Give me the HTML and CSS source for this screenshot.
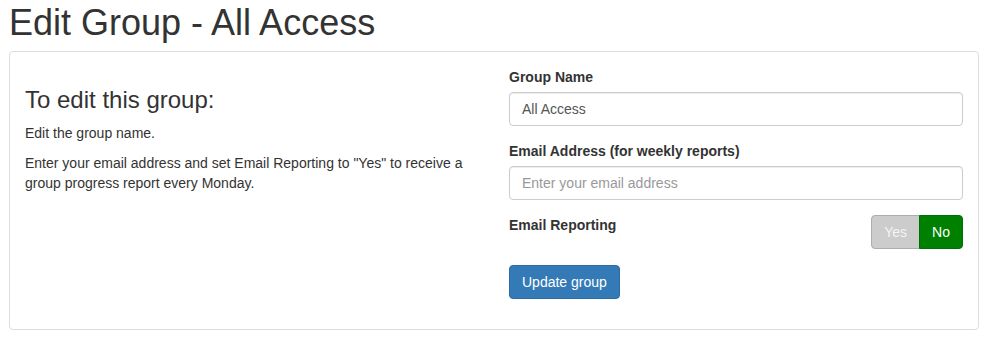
FILE: index.html
```html
<!DOCTYPE html>
<html lang="en">
<head>
  <meta charset="UTF-8" />
  <title>Edit Group - All Access</title>
  <link rel="stylesheet" href="styles.css">
</head>
<body>

  <div class="page">
    <h1 class="titulo">Edit Group - All Access</h1>

    <!-- Panel principal -->
    <div class="panel">
      <div class="columnas">

        <div class="ayuda">
          <h3>To edit this group:</h3>
          <p>Edit the group name.</p>
          <p>Enter your email address and set Email Reporting to "Yes" to receive a group progress report every Monday.</p>
        </div>

        <form class="formulario">
          <div class="grupo">
            <label for="groupName">Group Name</label>
            <input type="text" id="groupName" class="campo" value="All Access" />
          </div>

          <div class="grupo">
            <label for="email">Email Address (for weekly reports)</label>
            <input type="email" id="email" class="campo" placeholder="Enter your email address" />
          </div>

          <div class="grupo fila">
            <label>Email Reporting</label>
            <div class="toggle">
              <button type="button" class="opcion si">Yes</button>
              <button type="button" class="opcion no activo">No</button>
            </div>
          </div>

          <div class="grupo enviar">
            <button type="submit" class="boton">Update group</button>
          </div>
        </form>

      </div>
    </div>
  </div>

</body>
</html>
```

FILE: styles.css
```css
body {
  margin: 0;
  font-family: "Liberation Sans", Arial, sans-serif;
  font-size: 14px;
  line-height: 20px;
  color: #333;
  background: #fff;
}

.page {
  margin: 0 10px 0 9px;
}

.titulo {
  margin: 3px 0 8px 0;
  font-size: 36px;
  font-weight: normal;
  line-height: 1.1;
}

/* Panel */
.panel {
  border: 1px solid #ddd;
  border-radius: 4px;
  padding: 15px;
}

.columnas {
  display: grid;
  grid-template-columns: 1fr 1fr;
  column-gap: 30px;
}

.ayuda h3 {
  margin: 20px 0 10px 0;
  font-size: 24px;
  font-weight: normal;
  line-height: 1.1;
}

.ayuda p {
  margin: 0 0 10px 0;
}

/* Formulario */
.grupo {
  margin-bottom: 15px;
}

.grupo label {
  display: block;
  margin-bottom: 5px;
  font-weight: bold;
}

.campo {
  display: block;
  box-sizing: border-box;
  width: 100%;
  height: 34px;
  padding: 6px 12px;
  font-family: inherit;
  font-size: 14px;
  color: #555;
  border: 1px solid #ccc;
  border-radius: 4px;
  box-shadow: inset 0 1px 1px rgba(0, 0, 0, 0.075);
}

.campo::placeholder {
  color: #999;
}

.fila {
  display: flex;
  justify-content: space-between;
  align-items: flex-start;
}

.toggle {
  display: flex;
}

.opcion {
  height: 34px;
  padding: 6px 12px;
  font-family: inherit;
  font-size: 14px;
  line-height: 20px;
  border: 1px solid;
}

.si {
  background: #ccc;
  border-color: #adadad;
  color: #f4f4f4;
  border-radius: 4px 0 0 4px;
}

.no {
  background: #008000;
  border-color: #007000;
  color: #fff;
  border-radius: 0 4px 4px 0;
  margin-left: -1px;
}

.enviar {
  margin-top: 16px;
}

.boton {
  height: 34px;
  padding: 6px 12px;
  font-family: inherit;
  font-size: 14px;
  line-height: 20px;
  color: #fff;
  background: #337ab7;
  border: 1px solid #2e6da4;
  border-radius: 4px;
}
```
